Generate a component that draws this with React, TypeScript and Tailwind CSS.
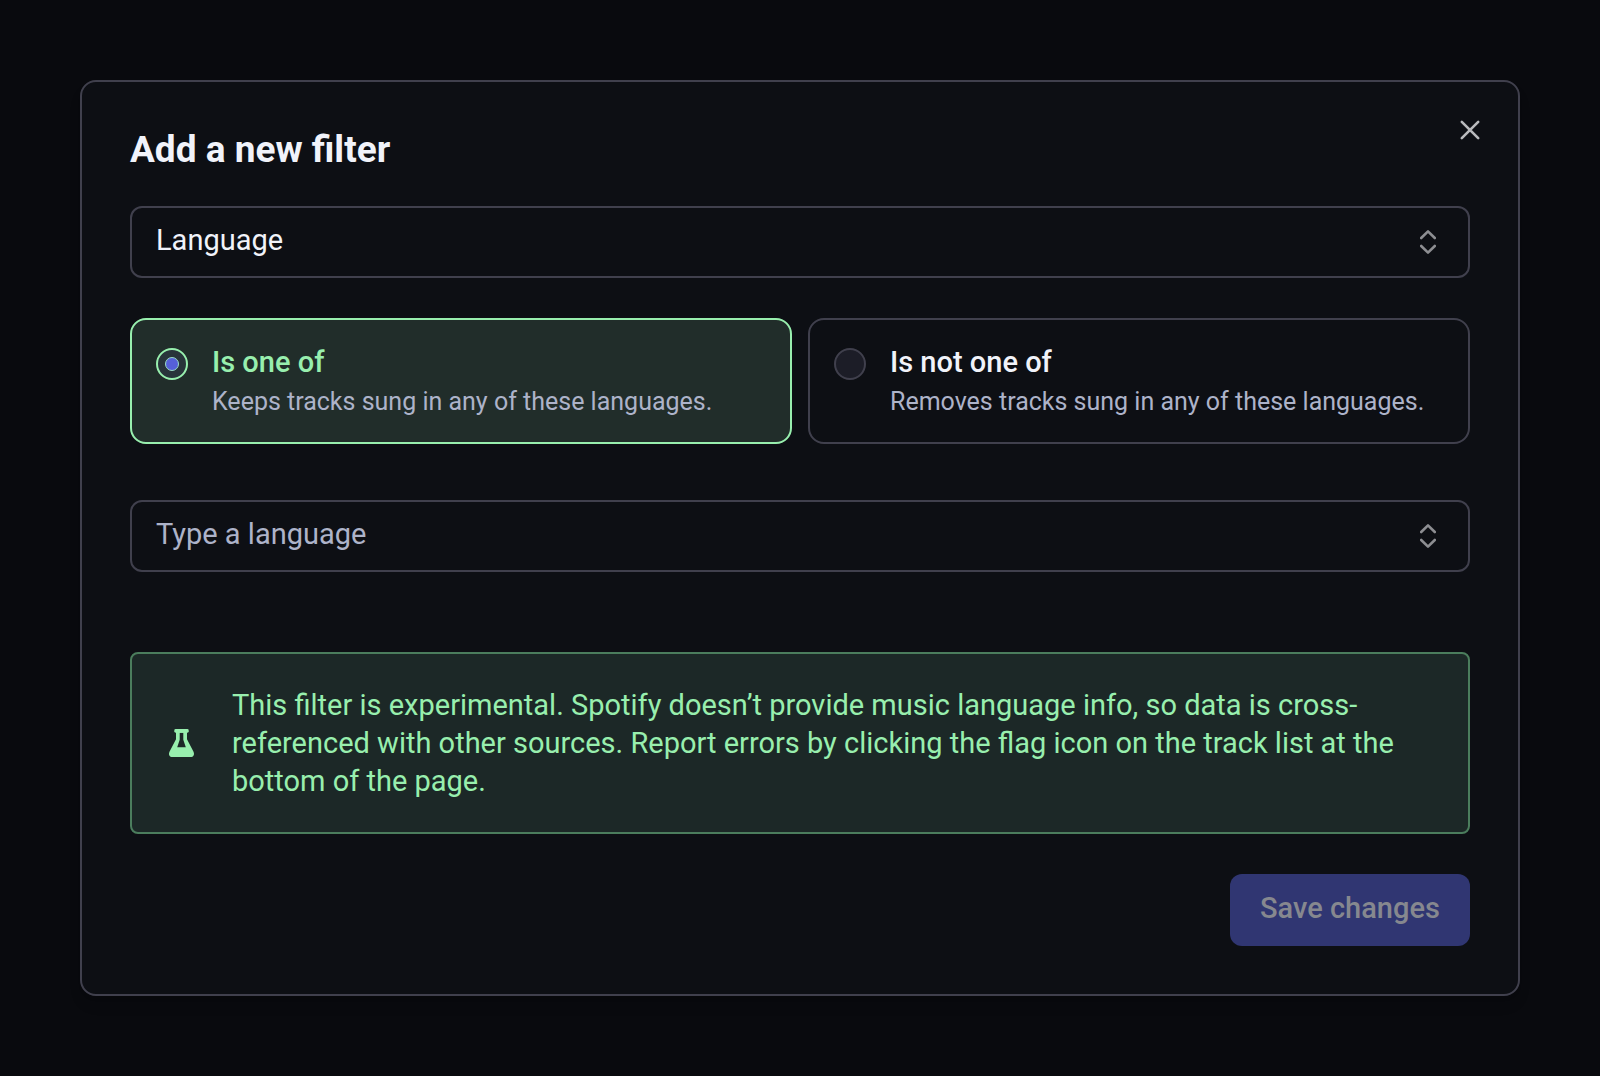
import { useState } from 'react';

const OPERATORS = [
  { id: 'is', label: 'Is one of', description: 'Keeps tracks sung in any of these languages.' },
  { id: 'is-not', label: 'Is not one of', description: 'Removes tracks sung in any of these languages.' },
];

function UpDownIcon() {
  return (
    <svg
      className="pointer-events-none absolute right-[34px] top-1/2 h-6 w-4 -translate-y-1/2 text-[#8d8e92]"
      viewBox="0 0 16 24"
      fill="none"
      stroke="currentColor"
      strokeWidth="2.6"
      strokeLinecap="round"
      strokeLinejoin="round"
      aria-hidden="true"
    >
      <path d="M1.2 8 8 1.4 14.8 8M1.2 16 8 22.6l6.8-6.6" />
    </svg>
  );
}

function FlaskIcon() {
  return (
    <svg className="size-7 shrink-0" viewBox="-1 0 28 28" fill="currentColor" aria-hidden="true">
      <rect x="5.3" y="0" width="14.4" height="3.7" rx="1.4" />
      <path
        fillRule="evenodd"
        d="M7 3v7.2L.6 22.4C-1 25.5.8 28 3.4 28h18.2c2.6 0 4.4-2.5 2.8-5.6L18 10.2V3ZM10.7 3.7v7.1L8.2 18.2h8.6l-2.5-7.4V3.7Z"
      />
    </svg>
  );
}

export default function App() {
  const [operator, setOperator] = useState('is');
  const [language, setLanguage] = useState('');

  return (
    <div className="min-h-screen bg-[#090a0e] p-20 font-['Roboto','Noto_Sans',sans-serif] text-[#f1f3fa]">
      <form
        role="dialog"
        aria-labelledby="dialog-title"
        onSubmit={(e) => e.preventDefault()}
        className="relative rounded-2xl border-2 border-[#40404d] bg-[#0d0f14] p-12 shadow-lg"
      >
        <button type="button" aria-label="Close" className="absolute right-8 top-8 p-1 text-[#b9babd]">
          <svg className="h-6 w-6" viewBox="0 0 24 24" fill="none" stroke="currentColor" strokeWidth="2.6" strokeLinecap="round" aria-hidden="true">
            <path d="m3.8 3.8 16.4 16.4M20.2 3.8 3.8 20.2" />
          </svg>
        </button>

        <h2 id="dialog-title" className="mb-9 text-[37px] leading-10 font-bold">Add a new filter</h2>

        {/* Filter type */}
        <div className="relative mb-10">
          <select
            aria-label="Filter type"
            className="block h-18 w-full appearance-none rounded-xl border-2 border-[#40404d] bg-transparent px-6 pb-0.5 text-[29px]"
          >
            <option>Language</option>
          </select>
          <UpDownIcon />
        </div>

        {/* Operator */}
        <div className="mb-14 grid grid-cols-2 gap-4">
          {OPERATORS.map((op) => (
            <label
              key={op.id}
              className="flex gap-6 rounded-2xl border-2 border-[#40404d] px-6 pb-[22px] pt-6 has-checked:border-[#98efae] has-checked:bg-[#212d2a]"
            >
              <input
                type="radio"
                name="operator"
                value={op.id}
                checked={operator === op.id}
                onChange={() => setOperator(op.id)}
                className="peer mt-1 flex size-8 shrink-0 appearance-none items-center justify-center rounded-full border-2 border-[#40404d] bg-[#1c1d27] checked:border-[#98efae] checked:bg-[#28343a] checked:before:size-[14px] checked:before:rounded-full checked:before:border checked:before:border-[#98dcc4] checked:before:bg-[#5660d8] checked:before:content-['']"
              />
              <span className="flex flex-col gap-1 peer-checked:text-[#98efae]">
                <span className="text-[29px] leading-9 font-medium">{op.label}</span>
                <span className="text-[25px] leading-9 text-[#adb3c9]">{op.description}</span>
              </span>
            </label>
          ))}
        </div>

        {/* Language */}
        <div className="relative mb-20">
          <input
            type="text"
            aria-label="Language"
            placeholder="Type a language"
            value={language}
            onChange={(e) => setLanguage(e.target.value)}
            className="block h-18 w-full rounded-xl border-2 border-[#40404d] bg-transparent px-6 pb-1 text-[29px] placeholder:text-[#adb3c9]"
          />
          <UpDownIcon />
        </div>

        <div className="mb-10 flex items-center gap-9 rounded-lg border-2 border-[#4b7d5d] bg-[#1c2827] px-9 py-8 text-[#98efae]">
          <FlaskIcon />
          <p className="text-[29px] leading-[38px]">
            This filter is experimental. Spotify doesn’t provide music language info, so data is cross-referenced with
            other sources. Report errors by clicking the flag icon on the track list at the bottom of the page.
          </p>
        </div>

        <div className="flex justify-end">
          <button
            type="submit"
            disabled={!language}
            className="h-18 w-60 rounded-xl bg-[#5f6bec] pb-0.5 text-[29px] font-medium disabled:bg-[#303672] disabled:text-[#86888f]"
          >
            Save changes
          </button>
        </div>
      </form>
    </div>
  );
}
